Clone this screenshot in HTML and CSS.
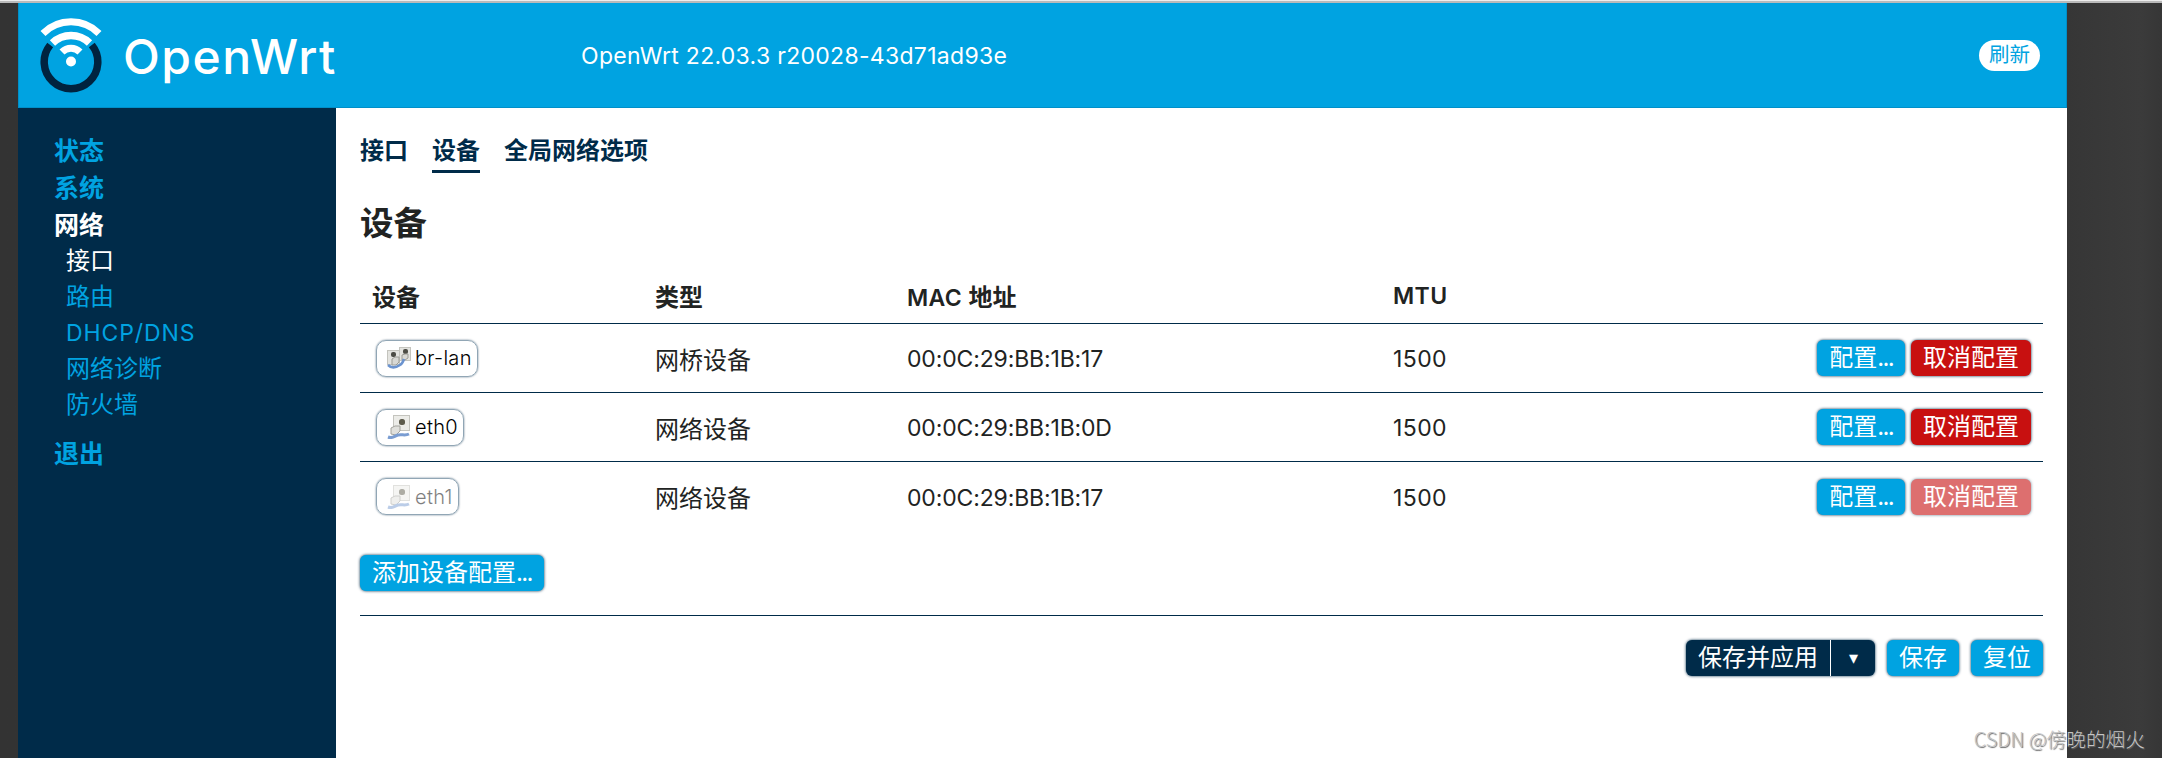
FILE: index.html
```html
<!DOCTYPE html>
<html lang="zh-CN">
<head>
    <meta charset="UTF-8">
    <meta name="viewport" content="width=device-width, initial-scale=1.0">
    <title>OpenWrt - 设备</title>
    <link rel="stylesheet" href="styles.css">
</head>
<body>
    <svg class="defs" width="0" height="0">
        <symbol id="icon-bridge" viewBox="0 0 24 24">
            <rect x=".5" y="4.500" width="12" height="14" fill="#e4e4e0" stroke="#c4c4be"/>
            <rect x="12.500" y="1.500" width="11" height="13" fill="#e4e4e0" stroke="#c4c4be"/>
            <rect x="4" y="6" width="5" height="5" rx="2" fill="#4c4c45"/>
            <rect x="16" y="3" width="5" height="5" rx="2" fill="#4c4c45"/>
            <path d="M5 13l3-2h4v5l-3 3H5z" fill="#d8d8d4" stroke="#9c9c96"/>
            <path d="M15 9l3-1h3v4l-3 2h-3z" fill="#d8d8d4" stroke="#9c9c96"/>
            <path d="M1 19c4 4 9 2 12 0 2-1 3-3 4-6" fill="none" stroke="#6b93cf" stroke-width="2.500"/>
        </symbol>
        <symbol id="icon-ethernet" viewBox="0 0 24 24">
            <rect x="6.500" y=".5" width="16" height="15" fill="#ecece8" stroke="#c4c4be"/>
            <rect x="12" y="4" width="6" height="6" rx="2.500" fill="#5d5b4c"/>
            <path d="M4 13l4-2h5v5l-4 4-5-1z" fill="#e0e0dc" stroke="#a2a29c"/>
            <path d="M1 22c5 2 6-1 10-2s7 1 11-1" fill="none" stroke="#7a9dd2" stroke-width="3"/>
        </symbol>
    </svg>

    <div class="page">
        <header>
            <svg class="logo" width="62" height="76" viewBox="0 0 62 76">
                <path d="M10.200 28A26.800 26.800 0 1 0 51.800 28" fill="none" stroke="#00233f" stroke-width="7.500"/>
                <path d="M3 16.500A39.500 39.500 0 0 1 59 16.500" fill="none" stroke="#fff" stroke-width="7"/>
                <path d="M12.500 26A26.500 26.500 0 0 1 49.500 26" fill="none" stroke="#fff" stroke-width="7.500"/>
                <path d="M22 35A12.700 12.700 0 0 1 40 35" fill="none" stroke="#fff" stroke-width="7"/>
                <circle cx="31" cy="44.500" r="5" fill="#fff"/>
            </svg>
            <span class="brand">OpenWrt</span>
            <span class="version">OpenWrt 22.03.3 r20028-43d71ad93e</span>
            <span class="refresh">刷新</span>
        </header>
        <div class="columns">
            <nav>
                <ul class="menu">
                    <li><a>状态</a></li>
                    <li><a>系统</a></li>
                    <li class="active">
                        <a>网络</a>
                        <ul class="submenu">
                            <li class="active">接口</li>
                            <li>路由</li>
                            <li class="latin">DHCP/DNS</li>
                            <li>网络诊断</li>
                            <li>防火墙</li>
                        </ul>
                    </li>
                    <li><a>退出</a></li>
                </ul>
            </nav>
            <main>
                <ul class="tabs">
                    <li>接口</li>
                    <li class="active">设备</li>
                    <li>全局网络选项</li>
                </ul>
                <h2>设备</h2>
                <div class="table">
                    <div class="tr titles">
                        <div>设备</div>
                        <div>类型</div>
                        <div class="mac">MAC <span>地址</span></div>
                        <div class="mtu">MTU</div>
                        <div></div>
                    </div>
                    <div class="tr">
                        <div><span class="badge"><svg><use href="#icon-bridge"/></svg><span>br-lan</span></span></div>
                        <div>网桥设备</div>
                        <div class="mac">00:0C:29:BB:1B:17</div>
                        <div class="mtu">1500</div>
                        <div class="actions"><button>配置<span class="dots">...</span></button><button class="negative">取消配置</button></div>
                    </div>
                    <div class="tr">
                        <div><span class="badge"><svg><use href="#icon-ethernet"/></svg><span>eth0</span></span></div>
                        <div>网络设备</div>
                        <div class="mac">00:0C:29:BB:1B:0D</div>
                        <div class="mtu">1500</div>
                        <div class="actions"><button>配置<span class="dots">...</span></button><button class="negative">取消配置</button></div>
                    </div>
                    <div class="tr">
                        <div><span class="badge inactive"><svg><use href="#icon-ethernet"/></svg><span>eth1</span></span></div>
                        <div>网络设备</div>
                        <div class="mac">00:0C:29:BB:1B:17</div>
                        <div class="mtu">1500</div>
                        <div class="actions"><button>配置<span class="dots">...</span></button><button class="negative" disabled>取消配置</button></div>
                    </div>
                </div>
                <button class="add">添加设备配置<span class="dots">...</span></button>
                <div class="page-actions">
                    <div class="dropdown"><span>保存并应用</span><span class="open">▾</span></div>
                    <button>保存</button>
                    <button>复位</button>
                </div>
            </main>
        </div>
    </div>
    <div class="watermark">CSDN @傍晚的烟火</div>
</body>
</html>
```

FILE: styles.css
```css
* {
    box-sizing: border-box;
}

body {
    margin: 0;
    height: 758px;
    overflow: hidden;
    padding-top: 3px;
    background:
        linear-gradient(#ededed 1px, #bababa 1px) top / 100% 3px no-repeat,
        linear-gradient(to right, #333, #363636 2067px, #3b3b3b 2140px, #363636);
    color: #212322;
    font-family: Inter, "Noto Sans CJK SC", sans-serif;
    font-size: 24px;
}

ul {
    list-style: none;
    margin: 0;
    padding: 0;
}

.defs {
    position: absolute;
}

.page {
    width: 2049px;
    height: 755px;
    margin-left: 18px;
    display: flex;
    flex-direction: column;
}

header {
    height: 105px;
    flex: none;
    display: flex;
    align-items: center;
    padding: 0 26px 0 21px;
    background: #00a3e1;
    border: 1px solid #008fc8;
    border-top: none;
    color: #fff;
}

.logo {
    flex: none;
}

.brand {
    width: 458px;
    margin-left: 21px;
    padding-top: 2px;
    font-size: 48px;
    font-weight: 500;
    letter-spacing: 1.5px;
}

.version {
    padding-top: 2px;
    font-size: 23px;
    letter-spacing: 0.3px;
}

.refresh {
    margin-left: auto;
    height: 31px;
    margin-top: 1px;
    padding: 0 10px;
    border-radius: 16px;
    background: #fff;
    color: #00a3e1;
    font-size: 20.5px;
    line-height: 30px;
}

.columns {
    flex: 1;
    display: flex;
}

nav {
    width: 318px;
    padding: 25px 0 0 36px;
    background: #002b49;
    color: #00a3e1;
}

.menu a {
    display: block;
    font-size: 25px;
    font-weight: bold;
    line-height: 37px;
}

.submenu {
    padding-left: 12px;
    margin: -1px 0 13px;
}

.submenu li {
    line-height: 36px;
}

.submenu .latin {
    font-size: 23px;
    letter-spacing: 0.9px;
}

.active > a,
.submenu .active {
    color: #fff;
}

main {
    flex: 1;
    padding: 24px 24px 0;
    background: #fff;
}

.tabs {
    display: flex;
    gap: 24px;
    color: #002b49;
    font-weight: bold;
}

.tabs li {
    height: 41px;
    line-height: 38px;
}

.tabs .active {
    border-bottom: 3px solid #002b49;
}

h2 {
    margin: 26px 0 0;
    font-size: 33.5px;
    line-height: 48px;
}

.table {
    margin-top: 24px;
}

.tr {
    display: grid;
    grid-template-columns: 283px 252px 486px 300px 1fr;
    align-items: center;
    height: 69px;
    padding: 0 12px;
    border-bottom: 1px solid #002b49;
}

.tr.titles {
    height: 53px;
    padding-bottom: 4px;
    font-weight: bold;
}

.tr:last-child {
    border-bottom: none;
}

.mac,
.mtu {
    padding-top: 2px;
    font-size: 23px;
}

.mac {
    letter-spacing: -0.15px;
}

.mtu {
    letter-spacing: 0.4px;
}

.titles .mac,
.titles .mtu {
    padding-top: 1px;
    font-weight: 600;
    letter-spacing: 0.4px;
}

.titles .mac span {
    font-size: 24px;
    font-weight: bold;
    letter-spacing: 0;
}

.badge {
    display: inline-flex;
    align-items: center;
    gap: 4px;
    height: 37px;
    margin-left: 4px;
    padding: 0 5px 0 10px;
    border: 1px solid #91a6b5;
    border-radius: 10px;
    box-shadow: 0 0 2px #002b49aa;
    color: #000;
    font-size: 20px;
    font-weight: 350;
    letter-spacing: 0.3px;
    vertical-align: middle;
}

.badge svg {
    width: 24px;
    height: 24px;
}

.badge.inactive > * {
    opacity: .5;
}

button,
.dropdown {
    height: 36px;
    padding: 0 12px;
    border: none;
    border-radius: 6px;
    background: #00a3e1;
    box-shadow: 0 0 3px #002b49;
    color: #fff;
    font: inherit;
    line-height: 36px;
}

.dots {
    letter-spacing: -1.7px;
}

.negative {
    background: #c81010;
}

.negative:disabled {
    opacity: .6;
}

.actions {
    display: flex;
    justify-content: flex-end;
    gap: 6px;
}

.add {
    display: block;
    margin-top: 24px;
}

.page-actions {
    display: flex;
    justify-content: flex-end;
    gap: 12px;
    margin-top: 24px;
    padding-top: 24px;
    border-top: 1px solid #002b49;
}

.dropdown {
    display: flex;
    padding-right: 0;
    background: #002b49;
}

.dropdown .open {
    width: 45px;
    margin-left: 12px;
    border-left: 1px solid #fff;
    font-size: 18px;
    text-align: center;
}

.watermark {
    position: absolute;
    right: 17px;
    bottom: 5px;
    color: #c4c4c4;
    font-family: "Noto Sans CJK SC", sans-serif;
    font-size: 19.7px;
    font-weight: 300;
    text-shadow: 1px 1px 1px #666;
}
```
